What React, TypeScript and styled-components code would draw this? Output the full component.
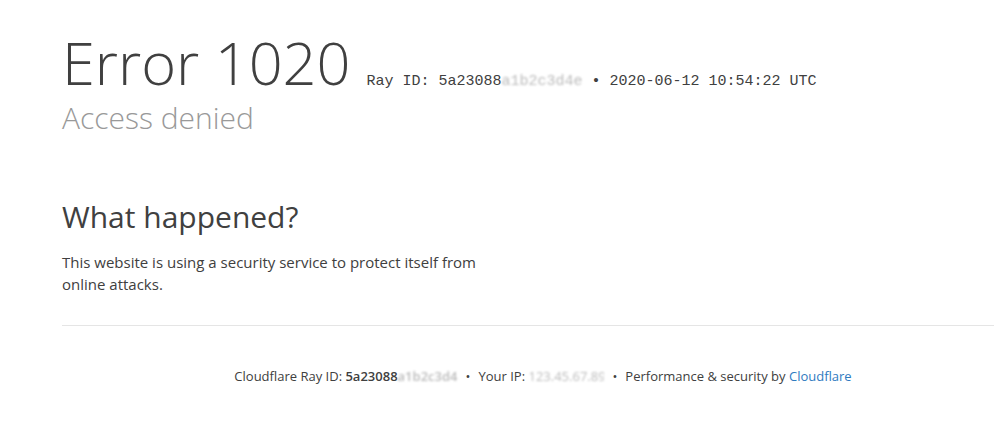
import React from "react";
import styled, { createGlobalStyle } from "styled-components";

const Global = createGlobalStyle`
  html, body { margin: 0; padding: 0; background: #fff; }
  body { font-family: "Open Sans", "Liberation Sans", sans-serif; color: #404040; overflow: hidden; }
`;

const Page = styled.div`
  padding: 32px 0 0 62px;
`;

const Header = styled.header`
  display: flex;
  flex-direction: column;
`;

const TitleRow = styled.div`
  display: flex;
  align-items: baseline;
  gap: 16px;
`;

const Title = styled.h1`
  margin: 0;
  font-size: 59.5px;
  font-weight: 300;
  line-height: 60px;
  color: #404040;
`;

const RayInfo = styled.span`
  font-family: "Liberation Mono", "Courier New", monospace;
  font-size: 15px;
  color: #404040;
`;

const Subtitle = styled.h2`
  margin: 6px 0 0;
  font-size: 30px;
  font-weight: 300;
  line-height: 40px;
  color: #999;
`;

const Section = styled.section`
  margin-top: 59px;
  width: 430px;
`;

const SectionTitle = styled.h2`
  margin: 0;
  font-size: 30px;
  font-weight: 400;
  line-height: 40px;
  color: #404040;
`;

const Paragraph = styled.p`
  margin: 14px 0 0;
  font-size: 15px;
  line-height: 22px;
  color: #404040;
`;

const Divider = styled.hr`
  margin: 30px 0 0;
  border: 0;
  border-top: 1px solid #e5e5e5;
`;

const Footer = styled.footer`
  display: flex;
  justify-content: center;
  align-items: center;
  gap: 8px;
  padding: 40px 0 0 0;
  margin-left: 30px;
  font-size: 13px;
  line-height: 20px;
  color: #404040;
`;

const Strong = styled.span`
  font-weight: 600;
`;

const Redacted = styled.span<{ $w: number }>`
  display: inline-block;
  width: ${(p) => p.$w}px;
  padding-right: 2px;
  color: #bbb;
  filter: blur(1.2px);
  overflow: hidden;
  white-space: nowrap;
  vertical-align: bottom;
`;

const Dot = styled.span`
  color: #404040;
`;

const Link = styled.a`
  color: #2f7bbf;
  text-decoration: none;
`;

export default function App() {
  return (
    <>
      <Global />
      <Page>
        <Header>
          <TitleRow>
            <Title>Error 1020</Title>
            <RayInfo>
              Ray ID: 5a23088<Redacted $w={79}>a1b2c3d4e</Redacted> • 2020-06-12 10:54:22 UTC
            </RayInfo>
          </TitleRow>
          <Subtitle>Access denied</Subtitle>
        </Header>
        <Section>
          <SectionTitle>What happened?</SectionTitle>
          <Paragraph>
            This website is using a security service to protect itself from online attacks.
          </Paragraph>
        </Section>
        <Divider />
        <Footer>
          <span>
            Cloudflare Ray ID: <Strong>5a23088<Redacted $w={58}>a1b2c3d4</Redacted></Strong>
          </span>
          <Dot>•</Dot>
          <span>
            Your IP: <Redacted $w={74}>123.45.67.89</Redacted>
          </span>
          <Dot>•</Dot>
          <span>
            Performance &amp; security by <Link>Cloudflare</Link>
          </span>
        </Footer>
      </Page>
    </>
  );
}
